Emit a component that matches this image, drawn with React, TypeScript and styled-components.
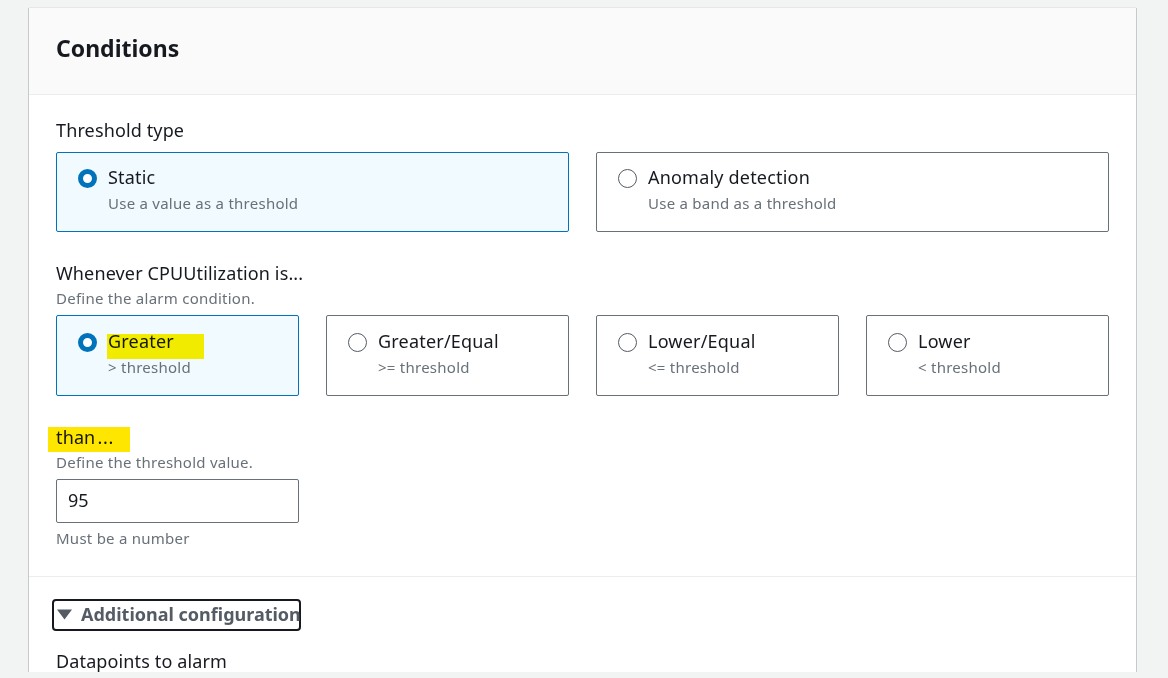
import React from "react";
import styled, { createGlobalStyle } from "styled-components";

const GlobalStyle = createGlobalStyle`
  html, body {
    margin: 0;
    height: 678px;
    overflow: hidden;
    background: #f2f3f3;
  }
  body {
    font-family: "Noto Sans", "Open Sans", sans-serif;
    color: #16191f;
  }
`;

const Page = styled.div`
  padding: 8px 32px 6px 29px;
  height: 678px;
  box-sizing: border-box;
`;

const Card = styled.section`
  height: 664px;
  overflow: hidden;
  background: #fff;
  box-shadow: 1px 0 0 0 #c6cacc, -1px 0 0 0 #c6cacc, 0 -1px 0 0 #e6e8e8;
`;

const Header = styled.header`
  height: 87px;
  box-sizing: border-box;
  padding: 0 27px 6px;
  display: flex;
  align-items: center;
  background: #fafafa;
  border-bottom: 1px solid #eaeded;
`;

const Title = styled.h2`
  margin: 0;
  font-size: 23px;
  line-height: 28px;
  font-weight: 700;
  color: #16191f;
`;

const Body = styled.div`
  padding: 23px 27px 0;
  height: 482px;
  box-sizing: border-box;
  border-bottom: 1px solid #eaeded;
`;

const Field = styled.div<{ $gap?: number }>`
  margin-bottom: ${(p) => p.$gap ?? 0}px;
`;

const Label = styled.div`
  font-size: 18px;
  line-height: 24px;
  letter-spacing: 0.13px;
  color: #16191f;
`;

const Hint = styled.div<{ $top?: number }>`
  margin-top: ${(p) => p.$top ?? 0}px;
  font-size: 15px;
  line-height: 20px;
  letter-spacing: 0.25px;
  color: #687078;
`;

const Tiles = styled.div<{ $cols: number }>`
  display: grid;
  grid-template-columns: repeat(${(p) => p.$cols}, 1fr);
  column-gap: 27px;
  margin-top: ${(p) => (p.$cols === 2 ? 10 : 7)}px;
`;

const Tile = styled.div<{ $selected?: boolean; $tall?: boolean }>`
  height: ${(p) => (p.$tall ? 80 : 81)}px;
  box-sizing: border-box;
  border: 1px solid ${(p) => (p.$selected ? "#0073bb" : "#687078")};
  border-radius: 2px;
  background: ${(p) => (p.$selected ? "#f1faff" : "#fff")};
  padding: ${(p) => (p.$tall ? 12 : 13)}px 21px;
  display: flex;
  gap: 11px;
`;

const Radio = styled.span<{ $selected?: boolean }>`
  flex: none;
  width: 19px;
  height: 19px;
  margin-top: 4px;
  box-sizing: border-box;
  border-radius: 50%;
  border: ${(p) => (p.$selected ? "5.5px solid #0073bb" : "1.5px solid #545b64")};
  background: #fff;
`;

const TileText = styled.div`
  min-width: 0;
`;

const TileTitle = styled.div`
  position: relative;
  font-size: 18px;
  line-height: 25px;
  letter-spacing: 0.2px;
  color: #16191f;
`;

// the yellow marker strokes sit over the text, multiply keeps the text visible
const Marker = styled.span<{ $left: number; $top: number; $width: number; $color: string }>`
  position: absolute;
  left: ${(p) => p.$left}px;
  top: ${(p) => p.$top}px;
  width: ${(p) => p.$width}px;
  height: 25px;
  background: ${(p) => p.$color};
  mix-blend-mode: multiply;
`;

const MarkedLabel = styled(Label)`
  position: relative;
`;

const Dots = styled.span`
  margin-left: 2px;
  letter-spacing: 0.8px;
`;

const NumberInput = styled.div`
  width: 243px;
  height: 44px;
  box-sizing: border-box;
  margin-top: 7px;
  border: 1px solid #687078;
  border-radius: 2px;
  padding: 0 11px 2px;
  display: flex;
  align-items: center;
  font-size: 18px;
  color: #16191f;
`;

const Footer = styled.div`
  padding: 22px 27px 0;
`;

const Toggle = styled.div`
  width: 249px;
  height: 32px;
  box-sizing: border-box;
  margin-left: -4px;
  padding: 0 0 2px 3px;
  border: 2px solid #16191f;
  border-radius: 4px;
  display: flex;
  align-items: center;
  gap: 9px;
  white-space: nowrap;
  font-size: 18px;
  font-weight: 700;
  color: #545b64;
`;

const FooterLabel = styled(Label)`
  margin-top: 18px;
`;

const Caret = () => (
  <svg width="15" height="11" viewBox="0 0 15 11" style={{ flex: "none" }}>
    <path d="M0 0.5h15L7.5 10.5z" fill="#545b64" />
  </svg>
);

type Option = { title: string; hint: string; selected?: boolean };

const thresholdTypes: Option[] = [
  { title: "Static", hint: "Use a value as a threshold", selected: true },
  { title: "Anomaly detection", hint: "Use a band as a threshold" },
];

const comparisons: Option[] = [
  { title: "Greater", hint: "> threshold", selected: true },
  { title: "Greater/Equal", hint: ">= threshold" },
  { title: "Lower/Equal", hint: "<= threshold" },
  { title: "Lower", hint: "< threshold" },
];

export default function App() {
  return (
    <>
      <GlobalStyle />
      <Page>
        <Card>
          <Header>
            <Title>Conditions</Title>
          </Header>
          <Body>
            <Field $gap={29}>
              <Label>Threshold type</Label>
              <Tiles $cols={2}>
                {thresholdTypes.map((o) => (
                  <Tile key={o.title} $selected={o.selected} $tall>
                    <Radio $selected={o.selected} />
                    <TileText>
                      <TileTitle>{o.title}</TileTitle>
                      <Hint $top={3}>{o.hint}</Hint>
                    </TileText>
                  </Tile>
                ))}
              </Tiles>
            </Field>
            <Field $gap={29}>
              <Label>Whenever CPUUtilization is...</Label>
              <Hint $top={3}>Define the alarm condition.</Hint>
              <Tiles $cols={4}>
                {comparisons.map((o) => (
                  <Tile key={o.title} $selected={o.selected}>
                    <Radio $selected={o.selected} />
                    <TileText>
                      <TileTitle>
                        {o.selected && <Marker $left={-1} $top={5} $width={97} $color="#fff000" />}
                        {o.title}
                      </TileTitle>
                      <Hint $top={3}>{o.hint}</Hint>
                    </TileText>
                  </Tile>
                ))}
              </Tiles>
            </Field>
            <Field>
              <MarkedLabel>
                <Marker $left={-8} $top={2} $width={82} $color="#ffe600" />
                than<Dots>...</Dots>
              </MarkedLabel>
              <Hint $top={3}>Define the threshold value.</Hint>
              <NumberInput>95</NumberInput>
              <Hint $top={5}>Must be a number</Hint>
            </Field>
          </Body>
          <Footer>
            <Toggle>
              <Caret />
              Additional configuration
            </Toggle>
            <FooterLabel>Datapoints to alarm</FooterLabel>
          </Footer>
        </Card>
      </Page>
    </>
  );
}
